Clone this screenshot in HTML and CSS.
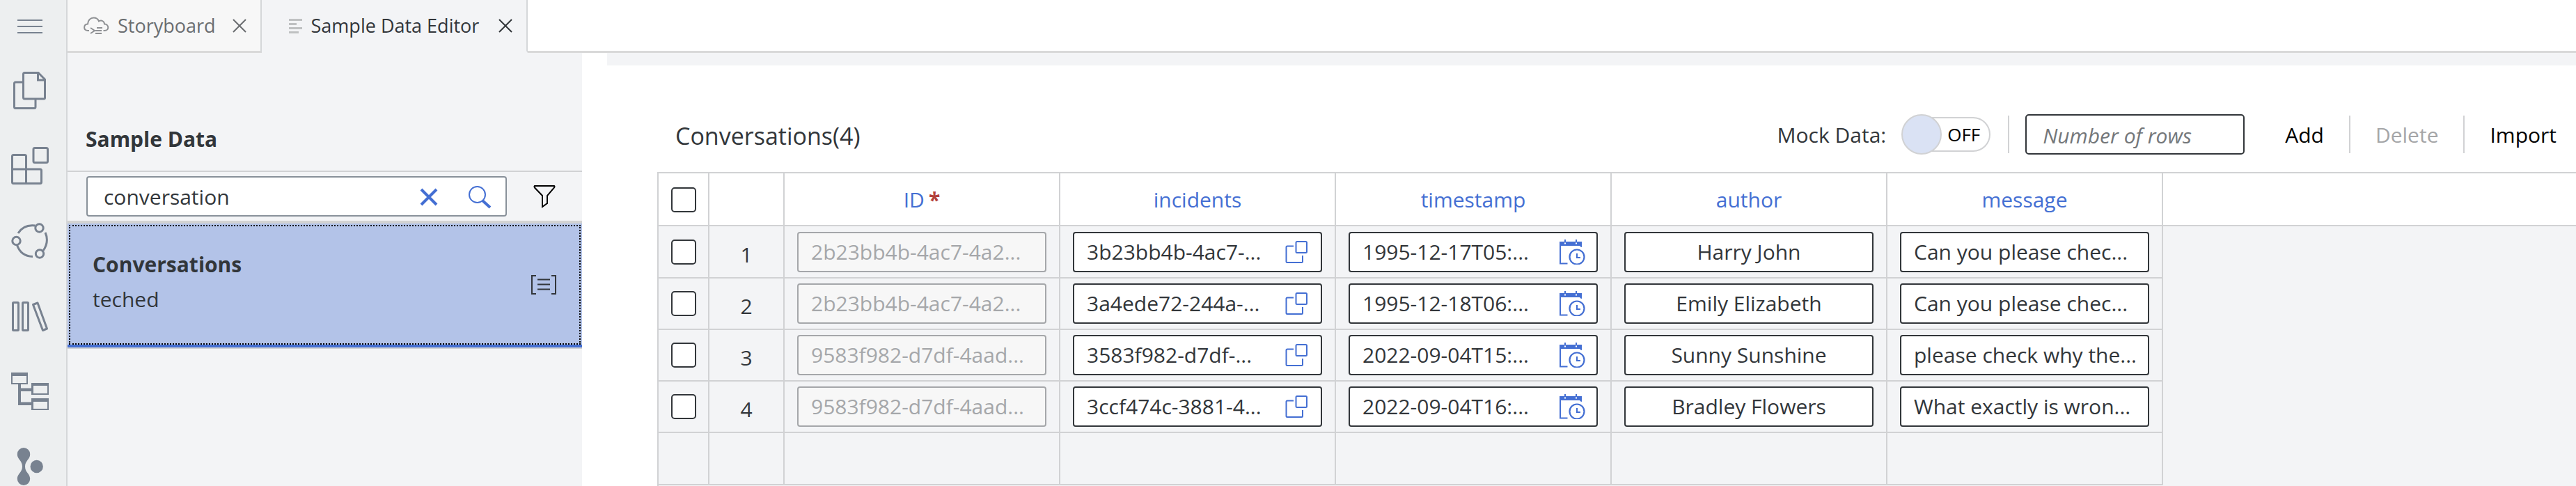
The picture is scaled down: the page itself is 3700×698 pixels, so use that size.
FILE: index.html
```html
<!DOCTYPE html>
<html lang="en">
<head>
<meta charset="utf-8">
<title>Sample Data Editor</title>
<link rel="stylesheet" href="styles.css">
</head>
<body>
<svg class="sprite" aria-hidden="true">
  <symbol id="i-close" viewBox="0 0 20 20"><path d="M1 1L19 19M19 1L1 19" fill="none" stroke="currentColor" stroke-width="2"/></symbol>
  <symbol id="i-link" viewBox="0 0 34 34"><path d="M18 2h12.500q1.500 0 1.500 1.500v13q0 1.500-1.500 1.500h-12.500q-1.500 0-1.500-1.500v-13q0-1.500 1.500-1.500zM13 8.500H4q-1.500 0-1.500 1.500v20.500q0 1.500 1.500 1.500h20.500q1.500 0 1.500-1.500V22" fill="none" stroke="currentColor" stroke-width="2"/></symbol>
  <symbol id="i-cal" viewBox="0 0 38 36"><path d="M1 3h32v8q-2 0-3-2H1z" fill="currentColor"/><path d="M2 8V34.500H12.500M9 0v4M25 0v4" fill="none" stroke="currentColor" stroke-width="2"/><circle cx="26" cy="25" r="10.500" fill="none" stroke="currentColor" stroke-width="2.200"/><path d="M26 20v6h5" fill="none" stroke="currentColor" stroke-width="2.200"/><path d="M8 4.500h2v2h-2zM24 4.500h2v2h-2z" fill="#fff"/></symbol>
</svg>

<nav class="rail" aria-label="Tools">
  <button class="rail-menu" aria-label="Menu"><svg width="36" height="22" viewBox="0 0 36 22"><path d="M0 2H36M0 11H36M0 20H36"/></svg></button>
  <button class="rail-btn" aria-label="Files"><svg width="54" height="54" viewBox="0 0 54 54"><path d="M19.500 1.500H39L48.500 11V37.500q0 1.500-1.500 1.500H19.500q-2 0-2-2V3.500q0-2 2-2zM38.500 2V12H48M17.500 15H6.500q-2 0-2 2V50.500q0 2 2 2H33q2 0 2-2V39"/></svg></button>
  <button class="rail-btn" aria-label="Components"><svg width="54" height="54" viewBox="0 0 54 54"><rect x="32" y="1.500" width="20.500" height="21" rx="2"/><path d="M3.500 11.500H19.500q2 0 2 2V32H41.500q2 0 2 2V50.500q0 2-2 2H3.500q-2 0-2-2V13.500q0-2 2-2zM1.500 32H21.500V52.500"/></svg></button>
  <button class="rail-btn" aria-label="Process"><svg width="54" height="54" viewBox="0 0 54 54"><circle cx="40.500" cy="8.500" r="5.700"/><circle cx="7.500" cy="27" r="5.700"/><circle cx="41" cy="45.500" r="5.700"/><path d="M10 16Q18 3 34.500 5M49 15Q55 28 46 41M8.500 33Q14 49 31 49.500"/></svg></button>
  <button class="rail-btn" aria-label="Library"><svg width="54" height="54" viewBox="0 0 54 54"><rect x="2.500" y="7.500" width="8" height="40" rx="1"/><rect x="16.500" y="7.500" width="8" height="40" rx="1"/><path d="M31.500 10.500L38 8L51.500 45L45.500 47.500z" stroke-linejoin="round"/></svg></button>
  <button class="rail-btn" aria-label="Hierarchy"><svg class="solid" width="54" height="54" viewBox="0 0 54 54"><path fill-rule="evenodd" d="M0 0H24V17H14V22.500H29V15H54V32H29V27H14V42.500H29V37H54V54H29V47H10V17H0zM2 5V15H22V5zM32 19V30H52V19zM32 42V52H52V42z"/></svg></button>
  <button class="rail-btn" aria-label="Repository"><svg class="solid" width="54" height="54" viewBox="0 0 54 54"><path d="M18 0a9.200 9.200 0 0 1 9.200 9.200c0 8-7.200 9-7.200 17.800s7.200 10 7.200 17.800a9.200 9.200 0 0 1-18.400 0c0-8 7.200-9 7.200-17.800S8.800 17 8.800 9.200A9.200 9.200 0 0 1 18 0z"/><circle cx="36.700" cy="27" r="9.200"/></svg></button>
</nav>

<div class="workspace">
  <div class="tabs" role="tablist">
    <div class="tab">
      <svg width="37" height="26" viewBox="0 0 37 26" fill="none" stroke="#8f9194" stroke-width="2"><path d="M8 20H6C-1 19 0 11 6 10.500C6 5 10 1.500 14.500 1.500C18 1.500 21 3.500 22 6.500C26 4 30 7 30 10.500C37 11 37 20 30 20H28.500M10 16l6 4-6 4"/><path d="M19 16h8M17 20h9M17 24h9"/></svg>
      <span role="tab">Storyboard</span>
      <button class="tab-close" aria-label="Close Storyboard"><svg width="20" height="20"><use href="#i-close"/></svg></button>
    </div>
    <div class="tab tab-active">
      <svg width="20" height="24" viewBox="0 0 20 24" stroke="#bfc1c2" stroke-width="3"><path d="M0 3.500H19M0 9.500H11M0 15.500H19M0 21.500H14"/></svg>
      <span role="tab" aria-selected="true">Sample Data Editor</span>
      <button class="tab-close" aria-label="Close Sample Data Editor"><svg width="20" height="20"><use href="#i-close"/></svg></button>
    </div>
    <div class="tabs-rest"></div>
  </div>

  <div class="content">
    <aside class="panel">
      <h2 class="panel-title">Sample Data</h2>
      <div class="search-row">
        <div class="search">
          <input type="text" value="conversation" aria-label="Search sample data">
          <button aria-label="Clear"><svg width="26" height="26" viewBox="0 0 26 26"><path d="M2 2L24 24M24 2L2 24" stroke="currentColor" stroke-width="4"/></svg></button>
          <button aria-label="Search"><svg width="34" height="34" viewBox="0 0 34 34" fill="none" stroke="currentColor"><circle cx="13.500" cy="13.500" r="11.500" stroke-width="2"/><path d="M21 22L32 32" stroke-width="4"/></svg></button>
        </div>
        <button class="filter" aria-label="Filter"><svg width="32" height="34" viewBox="0 0 32 34"><path d="M2 2H30Q31 3 30 4.500L20 16V27L13 32V16L2 4.500Q1 3 2 2z" fill="none" stroke="#000" stroke-width="2"/></svg></button>
      </div>
      <ul class="list">
        <li class="item">
          <div class="item-focus">
            <div class="item-text"><strong>Conversations</strong><span>teched</span></div>
            <svg width="38" height="28" viewBox="0 0 38 28" fill="none" stroke="#32363a" stroke-width="2"><path d="M8 1H2V27H8M30 1H36V27H30M10 6.500H28M10 13.500H28M10 20.500H28"/></svg>
          </div>
        </li>
      </ul>
    </aside>

    <main class="main">
      <div class="strip"></div>
      <div class="editor">
        <div class="toolbar">
          <h1 class="title">Conversations(4)</h1>
          <label class="mock" for="mock">Mock Data:</label>
          <span class="toggle"><input id="mock" type="checkbox" role="switch"><span>OFF</span></span>
          <span class="divider"></span>
          <input class="rows" type="text" placeholder="Number of rows" aria-label="Number of rows">
          <button class="action">Add</button>
          <span class="divider"></span>
          <button class="action" disabled>Delete</button>
          <span class="divider"></span>
          <button class="action">Import</button>
        </div>
        <table class="grid">
          <colgroup><col class="c-check"><col class="c-num"><col class="c-data"><col class="c-data"><col class="c-data"><col class="c-data"><col class="c-data"><col></colgroup>
          <thead>
            <tr><th><input type="checkbox" aria-label="Select all"></th><th></th><th>ID<span class="req">*</span></th><th>incidents</th><th>timestamp</th><th>author</th><th>message</th><th></th></tr>
          </thead>
          <tbody>
            <tr>
              <td><input type="checkbox" aria-label="Select row 1"></td><td class="num">1</td>
              <td><div class="field off"><input disabled aria-label="ID" value="2b23bb4b-4ac7-4a2..."></div></td>
              <td><div class="field"><input aria-label="incidents" value="3b23bb4b-4ac7-..."><button aria-label="Open value help"><svg width="34" height="34"><use href="#i-link"/></svg></button></div></td>
              <td><div class="field date"><input aria-label="timestamp" value="1995-12-17T05:..."><button aria-label="Pick date"><svg width="38" height="36"><use href="#i-cal"/></svg></button></div></td>
              <td><div class="field mid"><input aria-label="author" value="Harry John"></div></td>
              <td><div class="field"><input aria-label="message" value="Can you please chec..."></div></td><td></td>
            </tr>
            <tr>
              <td><input type="checkbox" aria-label="Select row 2"></td><td class="num">2</td>
              <td><div class="field off"><input disabled aria-label="ID" value="2b23bb4b-4ac7-4a2..."></div></td>
              <td><div class="field"><input aria-label="incidents" value="3a4ede72-244a-..."><button aria-label="Open value help"><svg width="34" height="34"><use href="#i-link"/></svg></button></div></td>
              <td><div class="field date"><input aria-label="timestamp" value="1995-12-18T06:..."><button aria-label="Pick date"><svg width="38" height="36"><use href="#i-cal"/></svg></button></div></td>
              <td><div class="field mid"><input aria-label="author" value="Emily Elizabeth"></div></td>
              <td><div class="field"><input aria-label="message" value="Can you please chec..."></div></td><td></td>
            </tr>
            <tr>
              <td><input type="checkbox" aria-label="Select row 3"></td><td class="num">3</td>
              <td><div class="field off"><input disabled aria-label="ID" value="9583f982-d7df-4aad..."></div></td>
              <td><div class="field"><input aria-label="incidents" value="3583f982-d7df-..."><button aria-label="Open value help"><svg width="34" height="34"><use href="#i-link"/></svg></button></div></td>
              <td><div class="field date"><input aria-label="timestamp" value="2022-09-04T15:..."><button aria-label="Pick date"><svg width="38" height="36"><use href="#i-cal"/></svg></button></div></td>
              <td><div class="field mid"><input aria-label="author" value="Sunny Sunshine"></div></td>
              <td><div class="field"><input aria-label="message" value="please check why the..."></div></td><td></td>
            </tr>
            <tr>
              <td><input type="checkbox" aria-label="Select row 4"></td><td class="num">4</td>
              <td><div class="field off"><input disabled aria-label="ID" value="9583f982-d7df-4aad..."></div></td>
              <td><div class="field"><input aria-label="incidents" value="3ccf474c-3881-4..."><button aria-label="Open value help"><svg width="34" height="34"><use href="#i-link"/></svg></button></div></td>
              <td><div class="field date"><input aria-label="timestamp" value="2022-09-04T16:..."><button aria-label="Pick date"><svg width="38" height="36"><use href="#i-cal"/></svg></button></div></td>
              <td><div class="field mid"><input aria-label="author" value="Bradley Flowers"></div></td>
              <td><div class="field"><input aria-label="message" value="What exactly is wron..."></div></td><td></td>
            </tr>
            <tr><td></td><td></td><td></td><td></td><td></td><td></td><td></td><td></td></tr>
          </tbody>
        </table>
      </div>
    </main>
  </div>
</div>
</body>
</html>
```
FILE: styles.css
```css
* { box-sizing: border-box; }

body {
  margin: 0;
  min-height: 100vh;
  display: flex;
  background: #fff;
  color: #32363a;
  font: 30px/40px "Open Sans", "Noto Sans", sans-serif;
}

svg { display: block; flex: none; }
.sprite { position: absolute; width: 0; height: 0; }

button {
  border: 0;
  padding: 0;
  background: none;
  color: inherit;
  font: inherit;
}

input { font: inherit; color: inherit; margin: 0; }

/* Left tool rail */
.rail {
  flex: none;
  width: 97px;
  border-right: 2px solid #d5d7d9;
  background: #edeff0;
  display: flex;
  flex-direction: column;
  padding-right: 9px;
}
.rail svg { fill: none; stroke: #788290; stroke-width: 3; }
.rail svg.solid { fill: #788290; stroke: none; }
.rail-menu, .rail-btn { display: flex; flex: none; align-items: center; justify-content: center; }
.rail-menu { height: 76px; }
.rail-menu svg { stroke-width: 2; }
.rail-btn { height: 108px; }
.rail-btn:last-child { height: 106px; padding-top: 2px; }

.workspace { flex: 1; min-width: 0; display: flex; flex-direction: column; }

/* Tabs */
.tabs { display: flex; height: 76px; font-size: 27px; }
.tab {
  display: flex;
  align-items: center;
  gap: 12px;
  padding: 0 20px 0 23px;
  background: #f7f7f7;
  border-right: 2px solid #d5d7d9;
  border-bottom: 3px solid #d9d9d9;
  color: #6a6d70;
  white-space: nowrap;
}
.tab-close { padding-left: 12px; }
.tab-active {
  padding-left: 39px;
  background: #f3f4f6;
  border-bottom-color: #f3f4f6;
  color: #32363a;
}
.tab-active .tab-close { padding-left: 16px; }
.tabs-rest { flex: 1; border-bottom: 3px solid #d9d9d9; }

.content { flex: 1; display: flex; gap: 36px; }

/* Sample data panel */
.panel { flex: none; width: 739px; background: #f3f4f6; }
.panel-title {
  margin: 0;
  padding: 104px 26px 25px;
  border-bottom: 2px solid #d1d2d4;
  font-size: 30px;
  line-height: 40px;
}
.search-row {
  display: flex;
  align-items: center;
  height: 74px;
  padding: 0 38px 0 27px;
  border-bottom: 4px solid #d3d3d3;
}
.search {
  flex: 1;
  display: flex;
  align-items: center;
  gap: 43px;
  height: 58px;
  padding: 2px 20px 0 23px;
  border: 2px solid #89919a;
  border-radius: 4px;
  background: #fff;
  color: #446fd3;
}
.search input {
  flex: 1;
  min-width: 0;
  border: 0;
  padding: 0;
  background: none;
  color: #32363a;
}
.filter { padding-left: 38px; }

.list { margin: 0; padding: 0; list-style: none; }
.item {
  padding: 2px 2px 0;
  background: #b3c3e8;
  border-bottom: 4px solid #446fd3;
  box-shadow: 0 2px #d1d2d4;
}
.item-focus {
  display: flex;
  align-items: center;
  justify-content: space-between;
  height: 172px;
  padding: 0 32px;
  border: 2px dotted #000;
}
.item-text { display: flex; flex-direction: column; gap: 10px; padding-bottom: 8px; }

/* Editor */
.main { flex: 1; min-width: 0; display: flex; flex-direction: column; }
.strip { height: 18px; background: #f3f4f6; }
.editor { flex: 1; display: flex; flex-direction: column; margin-left: 72px; }
.toolbar {
  display: flex;
  align-items: center;
  height: 153px;
  padding: 45px 28px 0 26px;
}
.title { flex: 1; margin: 0; padding-top: 4px; font-size: 34px; font-weight: 400; line-height: 44px; }
.mock { margin-right: 26px; padding-top: 2px; }
.toggle {
  display: flex;
  align-items: center;
  gap: 8px;
  width: 124px;
  height: 50px;
  border: 2px solid #d1d2d4;
  border-radius: 25px;
  color: #000;
  font-size: 26px;
}
.toggle input {
  flex: none;
  appearance: none;
  width: 58px;
  height: 58px;
  margin-left: -6px;
  border: 2px solid #d1d2d4;
  border-radius: 50%;
  background: #dae2f4;
}
.divider { width: 2px; height: 54px; background: #d1d2d4; }
.toggle + .divider { margin: 0 23px 0 25px; }
.rows {
  width: 315px;
  height: 58px;
  padding: 2px 23px 0;
  border: 2px solid #32363a;
  border-radius: 5px;
  background: #fff;
}
.rows::placeholder { color: #74777a; font-style: italic; }
.action { color: #000; padding: 2px 36px 0; }
.action:disabled { color: #a5a6a8; }
.rows + .action { padding-left: 58px; }
.action:last-child { padding-right: 0; }

/* Data grid */
.grid {
  width: 100%;
  table-layout: fixed;
  border-collapse: separate;
  border-spacing: 0;
  border-top: 2px solid #d1d2d4;
  border-left: 2px solid #d1d2d4;
}
.c-check { width: 73px; }
.c-num { width: 108px; }
.c-data { width: 396px; }
.grid th, .grid td {
  height: 74px;
  padding: 0;
  border-right: 2px solid #d1d2d4;
  border-bottom: 2px solid #d1d2d4;
  text-align: center;
  vertical-align: middle;
}
.grid th { height: 76px; padding-top: 2px; color: #446fd3; font-weight: 400; }
.grid th:last-child, .grid td:last-child { border-right: 0; }
.grid td:last-child { border-bottom: 0; }
.grid tr:first-child td, .grid tr:last-child td { height: 75px; }
.grid .num { padding-top: 8px; }
.grid tbody { background: #f3f4f6; }
.grid input[type="checkbox"] {
  display: block;
  appearance: none;
  width: 36px;
  height: 36px;
  margin: 0 auto;
  border: 2px solid #32363a;
  border-radius: 5px;
  background: #fff;
}
.req { margin-left: 6px; color: #b3403c; font-weight: 700; }
.editor::after { content: ""; flex: 1; background: #f3f4f6; border-left: 2px solid #d1d2d4; }

.field {
  display: flex;
  align-items: center;
  height: 58px;
  margin: 0 18px;
  padding: 0 18px;
  border: 2px solid #32363a;
  border-radius: 4px;
  background: #fff;
}
.field.date { padding-right: 16px; }
.field input {
  flex: 1;
  min-width: 0;
  height: 40px;
  padding: 0;
  border: 0;
  background: none;
}
.field button { color: #446fd3; }
.field.mid input { text-align: center; }
.field.off { border-color: #a5a7aa; background: #f7f7f7; color: #a5a7aa; }
```
